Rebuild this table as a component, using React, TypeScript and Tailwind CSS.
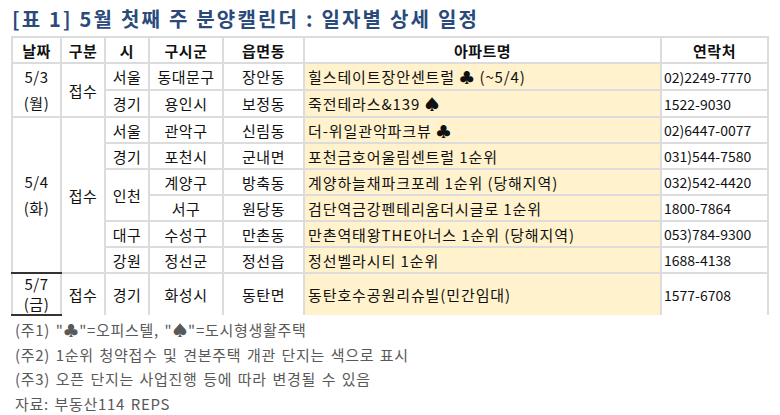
const font = { fontFamily: '"Noto Sans CJK KR", "Noto Sans", sans-serif' };

type Row = {
  city?: { name: string; span: number };
  gu: string;
  dong: string;
  apt: string;
  tel: string;
};

const may4: Row[] = [
  { city: { name: "서울", span: 1 }, gu: "관악구", dong: "신림동", apt: "더-위일관악파크뷰 ♣", tel: "02)6447-0077" },
  { city: { name: "경기", span: 1 }, gu: "포천시", dong: "군내면", apt: "포천금호어울림센트럴 1순위", tel: "031)544-7580" },
  { city: { name: "인천", span: 2 }, gu: "계양구", dong: "방축동", apt: "계양하늘채파크포레 1순위 (당해지역)", tel: "032)542-4420" },
  { gu: "서구", dong: "원당동", apt: "검단역금강펜테리움더시글로 1순위", tel: "1800-7864" },
  { city: { name: "대구", span: 1 }, gu: "수성구", dong: "만촌동", apt: "만촌역태왕THE아너스 1순위 (당해지역)", tel: "053)784-9300" },
  { city: { name: "강원", span: 1 }, gu: "정선군", dong: "정선읍", apt: "정선벨라시티 1순위", tel: "1688-4138" },
];

const cell = "border-2 border-[#dcdcdc] text-center p-0 leading-none tracking-[0.5px]";
const apt = "border-2 border-[#dcdcdc] bg-[#fff2cc] text-left pl-[3px] leading-none whitespace-nowrap tracking-[0.9px]";
const tel = "border-2 border-[#dcdcdc] text-left pl-[2px] leading-none whitespace-nowrap text-[14px]";

function DateCell({ d, w, span, cls = "" }: { d: string; w: string; span: number; cls?: string }) {
  return (
    <td rowSpan={span} className={`${cell} ${cls}`}>
      <div className="leading-[26px]">
        {d}
        <br />({w})
      </div>
    </td>
  );
}

export default function App() {
  return (
    <div className="w-[780px] h-[415px] bg-white text-[#111] overflow-hidden" style={font}>
      <div className="pl-[12px] pt-[5px] h-[36px] text-[20px] font-bold text-[#2a4a7b] leading-[28px] tracking-[2.2px] whitespace-nowrap">
        [표 1] 5월 첫째 주 분양캘린더 : 일자별 상세 일정
      </div>
      <table className="ml-[11px] border-collapse table-fixed w-[756px] text-[15px]">
        <colgroup>
          <col className="w-[49px]" />
          <col className="w-[44px]" />
          <col className="w-[44px]" />
          <col className="w-[74px]" />
          <col className="w-[81px]" />
          <col className="w-[357px]" />
          <col className="w-[107px]" />
        </colgroup>
        <thead>
          <tr className="h-[26px] font-bold">
            <th className={cell}>날짜</th>
            <th className={cell}>구분</th>
            <th className={cell}>시</th>
            <th className={cell}>구시군</th>
            <th className={cell}>읍면동</th>
            <th className={cell}>아파트명</th>
            <th className={cell}>연락처</th>
          </tr>
        </thead>
        <tbody>
          <tr className="h-[26px]">
            <DateCell d="5/3" w="월" span={2} />
            <td rowSpan={2} className={cell}>접수</td>
            <td className={cell}>서울</td>
            <td className={cell}>동대문구</td>
            <td className={cell}>장안동</td>
            <td className={apt}>힐스테이트장안센트럴 ♣ (~5/4)</td>
            <td className={tel}>02)2249-7770</td>
          </tr>
          <tr className="h-[26px]">
            <td className={cell}>경기</td>
            <td className={cell}>용인시</td>
            <td className={cell}>보정동</td>
            <td className={apt}>죽전테라스&amp;139 ♠</td>
            <td className={tel}>1522-9030</td>
          </tr>
          {may4.map((r, i) => (
            <tr key={i} className="h-[26px]">
              {i === 0 && <DateCell d="5/4" w="화" span={6} cls="border-b-[#333]" />}
              {i === 0 && <td rowSpan={6} className={cell}>접수</td>}
              {r.city && (
                <td rowSpan={r.city.span} className={cell}>
                  {r.city.name}
                </td>
              )}
              <td className={cell}>{r.gu}</td>
              <td className={cell}>{r.dong}</td>
              <td className={apt}>{r.apt}</td>
              <td className={tel}>{r.tel}</td>
            </tr>
          ))}
          <tr className="h-[41px]">
            <td className={`${cell} border-t-[#333] border-b-[#333]`}>
              <div className="leading-[20px]">
                5/7
                <br />
                (금)
              </div>
            </td>
            <td className={`${cell} border-b-0`}>접수</td>
            <td className={`${cell} border-b-0`}>경기</td>
            <td className={`${cell} border-b-0`}>화성시</td>
            <td className={`${cell} border-b-0`}>동탄면</td>
            <td className={`${apt} border-b-0`}>동탄호수공원리슈빌(민간임대)</td>
            <td className={`${tel} border-b-0`}>1577-6708</td>
          </tr>
        </tbody>
      </table>
      <div className="pl-[15px] pt-[2px] text-[15px] text-[#595959] leading-[24.5px] tracking-[0.7px] [word-spacing:1.6px] whitespace-nowrap">
        <div>(주1) "♣"=오피스텔, "♠"=도시형생활주택</div>
        <div>(주2) 1순위 청약접수 및 견본주택 개관 단지는 색으로 표시</div>
        <div>(주3) 오픈 단지는 사업진행 등에 따라 변경될 수 있음</div>
        <div>자료: 부동산114 REPS</div>
      </div>
    </div>
  );
}
